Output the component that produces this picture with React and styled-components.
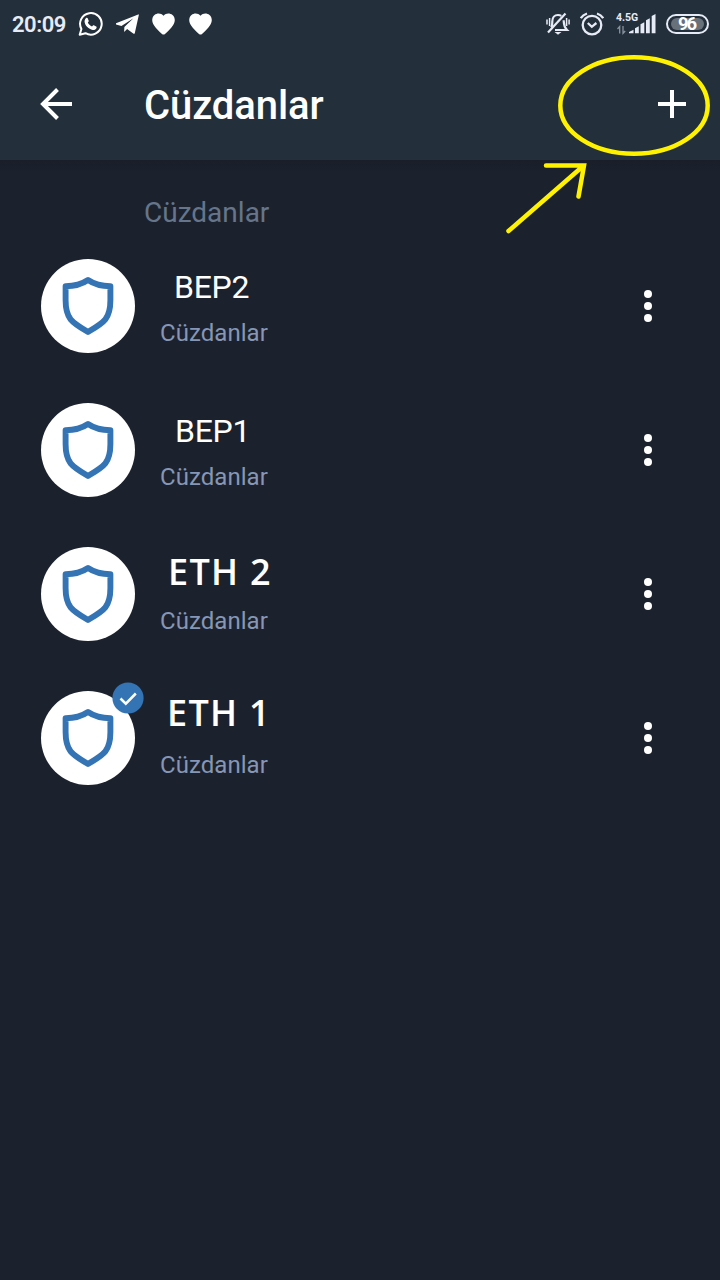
import styled, { createGlobalStyle } from "styled-components";

const theme = {
  header: "#242f3c",
  background: "#1b222d",
  white: "#ffffff",
  status: "#e6ebf5",
  muted: "#66758a",
  subtitle: "#8796b4",
  blue: "#3474b5",
  marker: "#fff200",
};

const GlobalStyle = createGlobalStyle`
  body {
    margin: 0;
    background: ${theme.background};
    font-family: Roboto, "Liberation Sans", sans-serif;
  }
`;

const Screen = styled.div`
  position: relative;
  width: 720px;
  height: 1280px;
  overflow: hidden;
  background: ${theme.background};
`;

const StatusBar = styled.div`
  display: flex;
  align-items: center;
  justify-content: space-between;
  box-sizing: border-box;
  height: 48px;
  padding: 0 11px 0 12px;
  background: ${theme.header};
  color: ${theme.status};
`;

const StatusGroup = styled.div`
  display: flex;
  align-items: center;
  gap: ${(props) => props.$gap}px;
`;

const Time = styled.span`
  width: 54px;
  padding-top: 2px;
  font-size: 22px;
  font-weight: 600;
  line-height: 46px;
  letter-spacing: -0.5px;
  white-space: nowrap;
`;

const Network = styled.div`
  display: flex;
  flex-direction: column;
  width: 40px;
  height: 24px;
  margin-left: 2px;
`;

const NetworkLabel = styled.span`
  height: 11px;
  font-size: 10.5px;
  font-weight: 700;
  line-height: 11px;
`;

const Signal = styled.svg`
  margin-top: -11px;
`;

const Battery = styled.div`
  display: flex;
  box-sizing: border-box;
  width: 43px;
  height: 20px;
  padding: 2px 3px;
  border: 2px solid ${theme.status};
  border-radius: 10px;
`;

const BatteryLevel = styled.div`
  flex: 1;
  border-radius: 6px;
  background: #68707a;
  color: ${theme.white};
  font-size: 18.5px;
  font-weight: 700;
  line-height: 13px;
  letter-spacing: -2px;
  text-indent: -2px;
  text-align: center;
`;

const Header = styled.header`
  display: flex;
  align-items: center;
  box-sizing: border-box;
  height: 112px;
  padding: 0 34px 0 40px;
  background: ${theme.header};
`;

const HeaderIcon = styled.svg`
  flex: none;
`;

const Title = styled.h1`
  flex: 1;
  margin: 4px 0 0 72px;
  color: ${theme.white};
  font-size: 40px;
  font-weight: 500;
  line-height: 48px;
  letter-spacing: -0.1px;
`;

const List = styled.main`
  height: 1120px;
  background: linear-gradient(#191e29, ${theme.background} 12px);
`;

const SectionTitle = styled.h2`
  box-sizing: border-box;
  height: 74px;
  margin: 0;
  padding: 37px 0 0 144px;
  color: ${theme.muted};
  font-size: 28px;
  font-weight: 400;
  line-height: 32px;
`;

const Row = styled.div`
  display: flex;
  align-items: center;
  box-sizing: border-box;
  height: 144px;
  padding: 0 64px 0 41px;
`;

const Avatar = styled.div`
  position: relative;
  display: flex;
  flex: none;
  align-items: center;
  justify-content: center;
  width: 94px;
  height: 94px;
  border-radius: 50%;
  background: ${theme.white};
`;

const Check = styled.svg`
  position: absolute;
  top: -9px;
  right: -9px;
`;

const Texts = styled.div`
  flex: 1;
  height: 144px;
  margin-left: 25px;
`;

const Name = styled.div`
  box-sizing: border-box;
  height: 83px;
  padding: ${(props) => props.$top}px 0 0 ${(props) => props.$left}px;
  color: ${theme.white};
  font-family: ${(props) =>
    props.$strong ? '"Open Sans", "Noto Sans", sans-serif' : "inherit"};
  font-size: ${(props) => (props.$strong ? 36 : 32)}px;
  font-weight: ${(props) => (props.$strong ? 600 : 400)};
  letter-spacing: ${(props) => (props.$strong ? 1.3 : -0.3)}px;
  line-height: 40px;
`;

const Subtitle = styled.div`
  color: ${theme.subtitle};
  font-size: 24px;
  line-height: 32px;
  letter-spacing: 0.05px;
`;

const Dots = styled.div`
  display: flex;
  flex-direction: column;
  gap: 4px;
  margin-right: 4px;
`;

const Dot = styled.span`
  width: 8px;
  height: 8px;
  border-radius: 50%;
  background: ${theme.white};
`;

const Marker = styled.svg`
  position: absolute;
  top: 48px;
  right: 0;
`;

const wallets = [
  { name: "BEP2", top: 33, left: 14 },
  { name: "BEP1", top: 33, left: 15 },
  { name: "ETH 2", top: 30, left: 8, strong: true },
  { name: "ETH 1", top: 27, left: 7, strong: true, active: true },
];

const WhatsAppIcon = () => (
  <svg width="26" height="26" viewBox="0.5 0 26 26">
    <path
      d="M2.2 23.8 3.9 18A10.8 10.8 0 1 1 8 22.2Z"
      fill="none"
      stroke={theme.white}
      strokeWidth="2"
      strokeLinejoin="round"
    />
    <path
      d="M8.4 7.2c.6-.6 1.5-.6 1.8.1l1 2.4c.2.5-.1 1-.9 1.9.8 1.7 2.2 3.1 4.2 3.9.9-1.1 1.3-1.5 1.8-1.3l2.400 1.2c.6.3.5 1 .2 1.8-.6 1.3-2.2 2-3.7 1.7-4-.8-7.600-4.200-8.100-7.900-.2-1.500.4-2.900 1.300-3.800Z"
      fill={theme.white}
    />
  </svg>
);

const TelegramIcon = () => (
  <svg width="24" height="22" viewBox="1 0 25.500 22">
    <path
      d="M24.6.8.9 10.3c-.7.3-.6.9.1 1.1l5.800 1.8L19.5 4.900 9.900 14.200l-.3 5.300 3.200-3.100 6.500 4.800c.8.5 1.500.3 1.700-.7L25.200 1.600c.1-.7-.1-1-.6-.8Z"
      fill={theme.white}
    />
  </svg>
);

const HeartIcon = () => (
  <svg width="25" height="22" viewBox="0.500 0 25 22">
    <path
      d="M12 2.700C9.600-.2 5.500-.1 3 1.900.1 4.400.1 8.700 2.300 12c2.100 3.200 5.300 6.700 8.200 8.900.9.700 2.100.7 3 0 2.900-2.200 6.100-5.700 8.200-8.900 2.200-3.300 2.200-7.600-.7-10.100-2.500-2-6.600-2.100-9 .8Z"
      fill={theme.white}
    />
  </svg>
);

const MutedBellIcon = () => (
  <svg
    width="24"
    height="24"
    viewBox="0 0 24 24"
    fill="none"
    stroke={theme.status}
    strokeWidth="2.200"
  >
    <path d="M5.200 15.500C6.400 14 6.300 12 6.300 9.500c0-3.800 2.300-6.500 5.700-6.500 1.200 0 2.400.3 3.300.9M17.700 8.300c.2 4.200-.1 6.300 3.300 9.700H9" />
    <path d="M2 20.500 19.500 1.500" />
    <path d="M8.500 20h7L12 22.800Z" fill={theme.status} stroke="none" />
    <path
      d="M1 7.500v5M3.600 6v8M20.600 6v8M23.100 7.500v5"
      strokeWidth="1.500"
    />
  </svg>
);

const AlarmIcon = () => (
  <svg
    width="24"
    height="24"
    viewBox="0 0 24 24"
    fill="none"
    stroke={theme.status}
    strokeWidth="2.300"
  >
    <circle cx="12" cy="13.100" r="9.300" />
    <path d="m7.800 11 4 3.800 4.600-3.800M.8 6.200Q2.800 2.800 7 1.500M17 1.500q4.200 1.300 6.200 4.700" />
  </svg>
);

const SignalIcon = () => (
  <Signal width="40" height="24" viewBox="0 0 40 24">
    <path
      d="M3.700 21.500v-7L1.500 17M7 14v7.300L9.200 19"
      fill="none"
      stroke="#8a93a0"
      strokeWidth="1.300"
    />
    <path
      d="M13 21.300v-1.300l4.500-2.300v3.600ZM19 21.300v-5l3.800-2v7ZM24.500 21.300v-9l3.800-2v11ZM30 21.300V8.300l3.800-2v15ZM35.700 21.300V4l3.800-2v19.300Z"
      fill={theme.status}
    />
  </Signal>
);

const ShieldIcon = () => (
  <svg width="54" height="60" viewBox="0 0 54 60">
    <path
      d="M27 4C20.500 8.400 13.500 10.200 4.600 10.200V24C4.600 43 11 46.500 27 56C43 46.500 49.400 43 49.400 24V10.200C40.500 10.200 33.500 8.400 27 4Z"
      fill="none"
      stroke={theme.blue}
      strokeWidth="5.900"
      strokeLinejoin="round"
    />
  </svg>
);

const WalletRow = ({ wallet }) => (
  <Row>
    <Avatar>
      <ShieldIcon />
      {wallet.active && (
        <Check width="32" height="32" viewBox="0 0 32 32">
          <circle cx="16" cy="16" r="15.600" fill={theme.blue} />
          <path
            d="m8.500 16.500 5.300 5.200 10-10.200"
            fill="none"
            stroke={theme.white}
            strokeWidth="2.500"
          />
        </Check>
      )}
    </Avatar>
    <Texts>
      <Name $top={wallet.top} $left={wallet.left} $strong={wallet.strong}>
        {wallet.name}
      </Name>
      <Subtitle>Cüzdanlar</Subtitle>
    </Texts>
    <Dots>
      <Dot />
      <Dot />
      <Dot />
    </Dots>
  </Row>
);

const App = () => (
  <>
    <GlobalStyle />
    <Screen>
      <StatusBar>
        <StatusGroup $gap={12}>
          <Time>20:09</Time>
          <WhatsAppIcon />
          <TelegramIcon />
          <HeartIcon />
          <HeartIcon />
        </StatusGroup>
        <StatusGroup $gap={10}>
          <MutedBellIcon />
          <AlarmIcon />
          <Network>
            <NetworkLabel>4.5G</NetworkLabel>
            <SignalIcon />
          </Network>
          <Battery>
            <BatteryLevel>96</BatteryLevel>
          </Battery>
        </StatusGroup>
      </StatusBar>
      <Header>
        <HeaderIcon width="32" height="32" viewBox="0 0 32 32">
          <path
            d="M32 16H3M17.500 1.500 3 16l14.500 14.500"
            fill="none"
            stroke={theme.white}
            strokeWidth="4"
          />
        </HeaderIcon>
        <Title>Cüzdanlar</Title>
        <HeaderIcon width="28" height="28" viewBox="0 0 28 28">
          <path d="M0 14h28M14 0v28" stroke={theme.white} strokeWidth="4" />
        </HeaderIcon>
      </Header>
      <List>
        <SectionTitle>Cüzdanlar</SectionTitle>
        {wallets.map((wallet) => (
          <WalletRow key={wallet.name} wallet={wallet} />
        ))}
      </List>
      <Marker
        width="220"
        height="190"
        viewBox="500 48 220 190"
        fill="none"
        stroke={theme.marker}
        strokeWidth="4.500"
        strokeLinecap="round"
      >
        <ellipse cx="634" cy="105.500" rx="73.700" ry="48.300" />
        <path d="M508.500 231 582 167M546 165.500h38l-5.500 31" />
      </Marker>
    </Screen>
  </>
);

export default App;
